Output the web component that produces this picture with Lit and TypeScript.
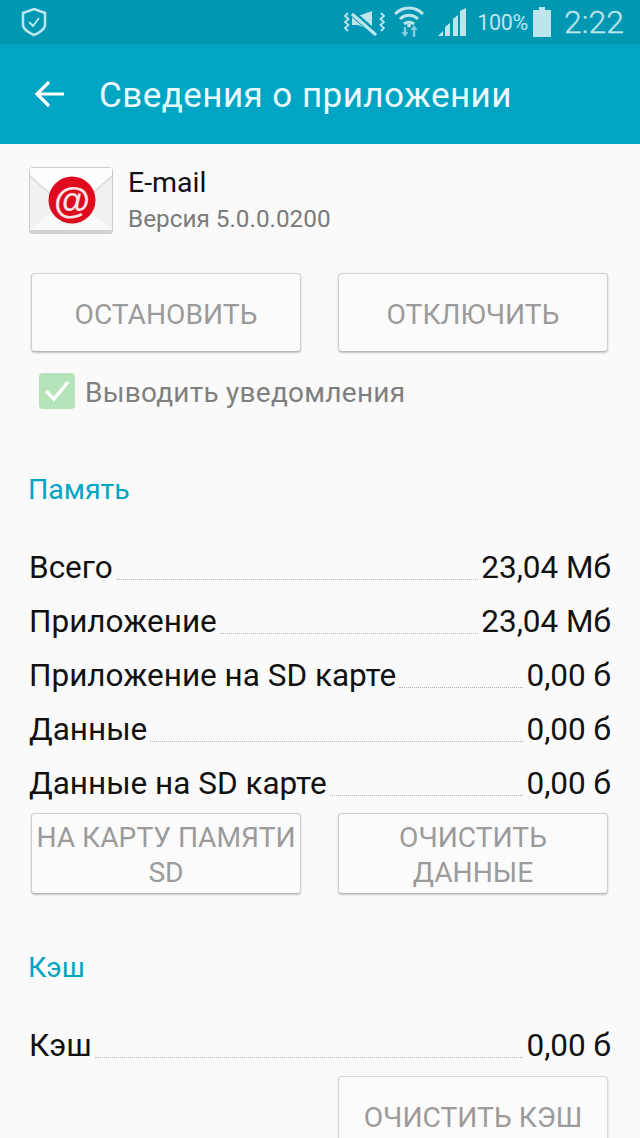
import { LitElement, html, css, svg } from "lit";
import { customElement } from "lit/decorators.js";

const rows1 = [
  ["Всего", "23,04 Мб"],
  ["Приложение", "23,04 Мб"],
  ["Приложение на SD карте", "0,00 б"],
  ["Данные", "0,00 б"],
  ["Данные на SD карте", "0,00 б"],
];

@customElement("app-root")
export class AppRoot extends LitElement {
  static styles = css`
    :host { display: block; width: 640px; height: 1138px; overflow: hidden; background: #fafafa; font-family: Roboto, "Liberation Sans", sans-serif; }
    .status { height: 44px; background: #0097b3; display: flex; align-items: center; padding: 0 16px 0 21px; color: #bfe5ec; }
    .status .spacer { flex: 1; }
    .status svg { display: block; flex: none; }
    .pct { font-size: 21.500px; margin-left: 11px; letter-spacing: -0.3px; }
    .clock { font-size: 32px; margin-left: 13px; font-weight: 300; -webkit-text-stroke: 0.3px #bfe5ec; }
    .toolbar { height: 100px; background: #00a5c4; display: flex; align-items: center; color: #fff; padding-left: 34px; }
    .toolbar h1 { margin: 3px 0 0 33px; font-size: 35px; font-weight: 400; letter-spacing: 0.45px; color: #eafafd; }
    .app { display: flex; padding: 23px 0 0 29px; height: 67px; }
    .app .txt { margin-left: 15px; }
    .name { font-size: 28.500px; line-height: 30px; margin-top: 1px; color: #111; }
    .ver { font-size: 24.300px; line-height: 30px; margin-top: 6px; color: #7b7b7b; }
    .btns { display: flex; gap: 37px; padding-left: 31px; }
    .btn { width: 270px; box-sizing: border-box; background: #fbfbfb; border: 1px solid #cfcfcf; border-bottom-color: #b8b8b8; box-shadow: 0 1px 2px rgba(0, 0, 0, 0.22); border-radius: 4px; color: #9b9b9b; font-size: 28.200px; line-height: 35px; padding-top: 3px; display: flex; align-items: center; justify-content: center; text-align: center; }
    .top { margin-top: 39px; }
    .top .btn { height: 79px; }
    .check { display: flex; align-items: center; margin: 21px 0 0 39px; height: 36px; }
    .box { width: 36px; height: 36px; border-radius: 4px; background: #b4e4b8; display: flex; align-items: center; justify-content: center; }
    .check span { margin: 2px 0 0 10px; font-size: 28px; color: #7f7f7f; letter-spacing: 0.25px; }
    .section { margin: 0 0 0 28px; color: #00a5c4; font-size: 28.500px; line-height: 32px; font-weight: 400; }
    .row { display: flex; align-items: baseline; height: 54px; line-height: 54px; margin: 0 29px 0 29px; font-size: 31.500px; color: #111; }
    .dots { flex: 1; margin: 0 3px; border-bottom: 1px dotted #b5b5b5; transform: translateY(2px); }
    .mem { margin-top: 35px; }
    .mid { margin-top: 2px; }
    .mid .btn { height: 81px; }
    .ghost { visibility: hidden; }
    .last { margin-top: 3px; }
    .last .btn { height: 80px; border-color: #d8d8d8; }
    .gap-mem { margin-top: 65px; }
    .gap-cache { margin-top: 58px; }
  `;

  private statusRight() {
    return html`
      <svg width="41" height="30" viewBox="0 0 41 30" fill="none" stroke="#bfe5ec">
        <path d="M4 6L1 9l3.500 3-3.500 3 3.500 3-3.500 3 3 3M37 6l3 3-3.500 3 3.500 3-3.500 3 3.500 3-3 3" stroke-width="1.800" />
        <path d="M8 9h6l14-5v20l-14-6H8z" fill="#bfe5ec" stroke="none" />
        <path d="M7 5l26 23" stroke="#0097b3" stroke-width="6.500" />
        <path d="M8 7l24 21" stroke-width="3.200" />
      </svg>
      <svg style="margin-left:9px" width="30" height="32" viewBox="0 0 30 32" fill="none" stroke="#bfe5ec" stroke-width="3">
        <path d="M1 8c8-8 20-8 28 0M6 13c5.500-5 12.500-5 18 0M10 18c3-2.500 7-2.500 10 0" />
        <circle cx="15" cy="19.500" r="2" fill="#bfe5ec" stroke="none" />
        <path d="M11 21v9M20 22v9" stroke="#86cbd9" stroke-width="2.500" />
        <path d="M7.500 26l3.500 5 3.500-5zM16.500 24l3.500-5 3.500 5z" fill="#86cbd9" stroke="none" />
      </svg>
      <svg style="margin-left:14px" width="28" height="28" viewBox="0 0 28 28" fill="#bfe5ec">
        <path d="M0 28l5-5v5zM7 28V19l5-4v13zM15 28V11l5-4v21zM22 28V3l6-3v28z" />
      </svg>
      <span class="pct">100%</span>
      <svg style="margin-left:5px" width="18" height="30" viewBox="0 0 18 30" fill="#bfe5ec">
        <path d="M6 0h6v3h6v27H0V3h6z" />
      </svg>
      <span class="clock">2:22</span>
    `;
  }

  private mailIcon() {
    return html`
      <svg width="84" height="67" viewBox="0 0 84 67">
        <rect x="0.500" y="0.500" width="83" height="66" rx="3" fill="#f1f1f1" stroke="#cbcbcb" />
        <path d="M1 63L30 39h24l29 24z" fill="#f9f9f9" />
        <path d="M1 9l41 36 41-36" fill="none" stroke="#d8d8d8" stroke-width="1.500" />
        <path d="M1 1h82v7L42 44 1 8z" fill="#fdfdfd" />
        <rect x="0.500" y="63" width="83" height="3.500" rx="1.500" fill="#d2d2d2" />
        <circle cx="43" cy="34" r="23.500" fill="#b9b9b9" opacity="0.35" />
        <circle cx="43" cy="33" r="23.500" fill="#df0a1e" />
        ${svg`<text x="43" y="46" text-anchor="middle" font-family="Liberation Sans, sans-serif" font-size="37" font-weight="700" fill="#f8e4e6">@</text>`}
      </svg>
    `;
  }

  render() {
    return html`
      <div class="status">
        <svg width="26" height="30" viewBox="0 0 26 30" fill="none" stroke="#bfe5ec" stroke-width="2.500">
          <path d="M13 2l11 4v12c0 4-6 8-11 10c-5-2-11-6-11-10V6z" />
          <path d="M8 15l4 4 6-8" stroke-width="2" />
        </svg>
        <div class="spacer"></div>
        ${this.statusRight()}
      </div>
      <div class="toolbar">
        <svg width="32" height="30" viewBox="0 0 32 30" fill="none" stroke="#fff" stroke-width="3.200">
          <path d="M30 15H3M15 3L3 15l12 12" />
        </svg>
        <h1>Сведения о приложении</h1>
      </div>
      <div class="app">
        ${this.mailIcon()}
        <div class="txt">
          <div class="name">E-mail</div>
          <div class="ver">Версия 5.0.0.0200</div>
        </div>
      </div>
      <div class="btns top">
        <div class="btn">ОСТАНОВИТЬ</div>
        <div class="btn">ОТКЛЮЧИТЬ</div>
      </div>
      <div class="check">
        <div class="box">
          <svg width="28" height="24" viewBox="0 0 28 24" fill="none" stroke="#fff" stroke-width="3.500"><path d="M3 12l8 8L25 3" /></svg>
        </div>
        <span>Выводить уведомления</span>
      </div>
      <h2 class="section gap-mem">Память</h2>
      <div class="mem">
        ${rows1.map(([a, b]) => html`<div class="row"><span>${a}</span><i class="dots"></i><span>${b}</span></div>`)}
      </div>
      <div class="btns mid">
        <div class="btn">НА КАРТУ ПАМЯТИ<br />SD</div>
        <div class="btn">ОЧИСТИТЬ<br />ДАННЫЕ</div>
      </div>
      <h2 class="section gap-cache">Кэш</h2>
      <div class="mem">
        <div class="row"><span>Кэш</span><i class="dots"></i><span>0,00 б</span></div>
      </div>
      <div class="btns last">
        <div class="btn ghost"></div>
        <div class="btn">ОЧИСТИТЬ КЭШ</div>
      </div>
    `;
  }
}
